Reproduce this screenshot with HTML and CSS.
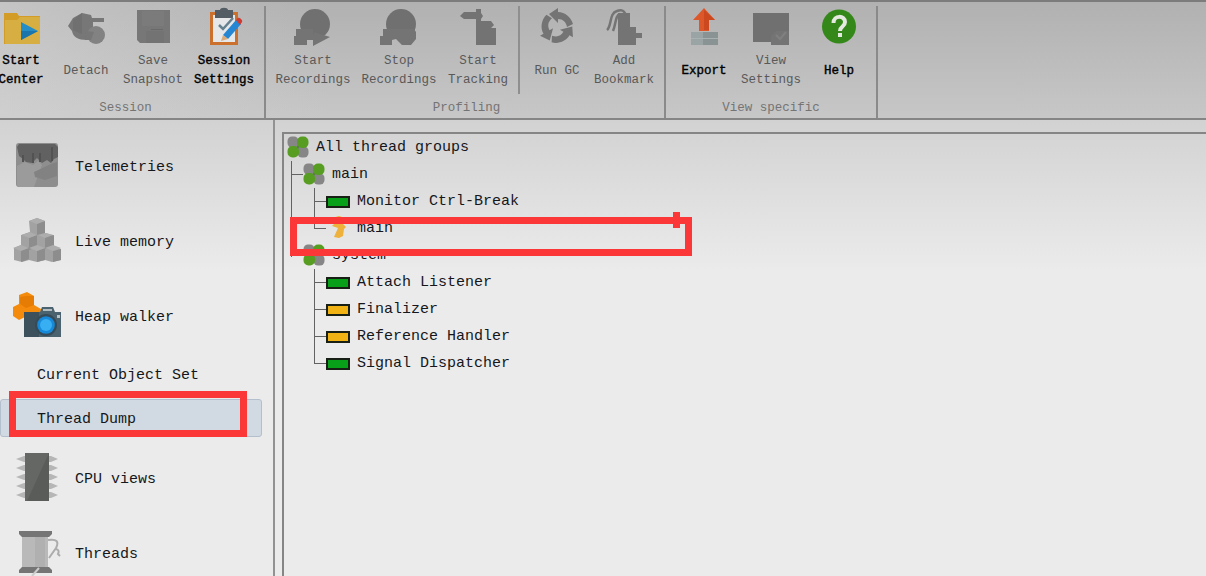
FILE: index.html
```html
<!DOCTYPE html>
<html lang="en">
<head>
<meta charset="utf-8">
<title>Thread Dump</title>
<link rel="stylesheet" href="styles.css">
</head>
<body>
<svg class="defs" width="0" height="0">
  <symbol id="clover" viewBox="0 0 22 22">
    <rect x="5" y="5" width="12" height="12" fill="#5d7350"/>
    <rect x="0.5" y="0.5" width="11" height="11" rx="4.500" fill="#858685"/>
    <rect x="10.500" y="10.500" width="11" height="11" rx="4.500" fill="#858685"/>
    <rect x="10" y="0.5" width="11.500" height="11.500" rx="5" fill="#579d22"/>
    <rect x="0.5" y="10" width="11.500" height="11.500" rx="5" fill="#579d22"/>
  </symbol>
</svg>
<header class="toolbar">
  <section class="group session">
    <div class="buttons">
      <div class="tool start"><svg viewBox="0 0 40 40"><path d="M3 6h13l2 3h21v28H3z" fill="#d29c26"/><path d="M4 13h12l3-3h20v27H4z" fill="#d6ae42"/><path d="M20 15l17 9-17 9z" fill="#258dc5"/><path d="M20 24h17l-17 9z" fill="#1975ab"/></svg><span>Start<br>Center</span></div>
      <div class="tool off detach"><svg viewBox="0 0 40 40"><path d="M2 19l5-8 9-5 9 2 1 3h12v4H27v5l-6 13c-9 0-14-3-15-9z" fill="#777"/><circle cx="30" cy="28" r="9" fill="#828282"/><path d="M20 24l8 1-3 8h-6z" fill="#777"/><path d="M7 13l9-7v21l-9-4z" fill="#707070"/></svg><span>Detach</span></div>
      <div class="tool off save"><svg viewBox="0 0 40 40"><path d="M4 3h33v33H7l-3-3z" fill="#777"/><path d="M9 4h22v15H9z" fill="#7b7b7b"/><path d="M13 24h18v12H13z" fill="#737373"/><path d="M18 22h12v1H18z" fill="#696969"/></svg><span>Save<br>Snapshot</span></div>
      <div class="tool settings"><svg viewBox="0 0 40 40"><path d="M6 5h28v33H6z" fill="#cb702d"/><path d="M9 8h22v27H9z" fill="#e5e7e8"/><path d="M11 3h5c0-3 8-3 8 0h5v8H11z" fill="#535d63"/><path d="M15 18l4 4 10-11" fill="none" stroke="#65808f" stroke-width="2.500"/><path d="M19 28L32 13l5 4-13 15z" fill="#2586d3"/><path d="M32 13l2-2c1-1 5 2 4 4l-2 3z" fill="#ce3b32"/><path d="M19 28l5 4-7 2z" fill="#d8aa79"/></svg><span>Session<br>Settings</span></div>
    </div>
    <h2>Session</h2>
  </section>
  <section class="group profiling">
    <div class="buttons">
      <div class="tool off rec"><svg viewBox="0 0 40 40"><circle cx="22" cy="17" r="15" fill="#707070"/><path d="M3 22h17v7l1-4 16 5-17 9v-6h-6v5H1v-9h2z" fill="#747474"/></svg><span>Start<br>Recordings</span></div>
      <div class="tool off stop"><svg viewBox="0 0 40 40"><circle cx="22" cy="17" r="15" fill="#707070"/><path d="M4 22h31l2 3v7l-5 6h-9l-6-6-4 1v5H1v-9h3z" fill="#747474"/></svg><span>Stop<br>Recordings</span></div>
      <div class="tool off track"><svg viewBox="0 0 40 40"><path d="M2 9l4-4h12V2h5v4l2 3-2 3v2h10l3 4-3 3h5v17H18V12H6z" fill="#737373"/></svg><span>Start<br>Tracking</span></div>
      <i class="divider"></i>
      <div class="tool off gc"><svg viewBox="0 0 40 40"><g id="arrow"><path d="M12 7l9-6v4c7 0 13 5 15 12l-6 3c-1-5-4-8-9-8v4z" fill="#747474"/></g><use href="#arrow" transform="rotate(120 20 20)"/><use href="#arrow" transform="rotate(240 20 20)"/></svg><span>Run GC</span></div>
      <div class="tool off mark"><svg viewBox="0 0 40 40"><path d="M14 6h12v14h6v6h6v5h-6v7H14z" fill="#747474"/><path d="M3 23C8 19 5 6 13 4q7-3 9 5M9 24c3-6 2-16 7-17" fill="none" stroke="#747474" stroke-width="2.500"/></svg><span>Add<br>Bookmark</span></div>
    </div>
    <h2>Profiling</h2>
  </section>
  <section class="group view">
    <div class="buttons">
      <div class="tool export"><svg viewBox="0 0 40 40"><path d="M20 1l11 12h-6v11H15V13H9z" fill="#dc582b"/><path d="M20 3v20h5V13h6z" fill="#cc481e"/><path d="M7 25h27v13H7z" fill="#9ba4a4"/><path d="M19 25h15v13H19z" fill="#8a9394"/><path d="M7 31h27v1H7z" fill="#a9b0b0"/></svg><span>Export</span></div>
      <div class="tool off vset"><svg viewBox="0 0 40 40"><path d="M2 6h36v32H20v-3H2z" fill="#707070"/><path d="M25 24h13v14H20v-9z" fill="#747474"/><path d="M25 28l4 4 6-7" fill="none" stroke="#808080" stroke-width="2"/></svg><span>View<br>Settings</span></div>
      <div class="tool help"><svg viewBox="0 0 40 40"><circle cx="20" cy="19.500" r="17" fill="#348719"/><path d="M14.500 16c0-8 11.500-8 11.500-1 0 5-5 4-5 9" fill="none" stroke="#e5e9e1" stroke-width="4"/><path d="M19 26h4v4h-4z" fill="#e5e9e1"/></svg><span>Help</span></div>
    </div>
    <h2>View specific</h2>
  </section>
</header>
<main class="workspace">
  <nav class="sidebar">
    <div class="nav-item"><svg viewBox="0 0 50 50"><rect x="4" y="1" width="42" height="44" rx="3" fill="#8e8e8e"/><path d="M5 5l2-3h36l3 3v10l-4 2-3 4-4-3-5 3-5-5-5 5-6-1-3-3-4-3z" fill="#616161"/><path d="M5 24l8-4 8 3 5-4 4 4-8 22H7l-2-2z" fill="#9b9b9b"/><path d="M22 30l17-8 6-2v14l-12 4-10-3z" fill="#828282"/><path d="M11 13v7m10-9v10m7-10v9m12-15v14" stroke="#525252" stroke-width="2"/></svg><span>Telemetries</span></div>
    <div class="nav-item"><svg viewBox="0 0 50 50"><path d="M17 4l8-3 8 3v12l8 2 1 11 7 3v11l-9 2-7-2-8 2-8-2-7 2-8-2V31l7-3V18l9-3z" fill="#a2a2a2"/><path d="M25 6l8-2v12l-8 2zM17 21l8-3v12l-8 3zM33 20l9-2v11l-9 3zM9 33l8-3v12l-8 3zM25 34l8-3v12l-8 2zM41 34l8-2v11l-8 2z" fill="#8d8d8d"/><path d="M17 4l8-3 8 3-8 3zM10 18l8-3 7 3-8 3zM26 18l8-2 7 2-8 3zM1 31l8-3 8 3-8 3zM17 31l8-3 8 3-8 3zM33 31l8-3 8 3-8 3z" fill="#adadad"/></svg><span>Live memory</span></div>
    <div class="nav-item"><svg viewBox="0 0 50 50"><path d="M7 3l8-3 7 4v9l7 4-1 7-8 2-5-2-8 4-6-4v-9l6-3z" fill="#f48b0c"/><path d="M14 4l8 0v9l-8 3-6-4v-7z" fill="#e77c05"/><path d="M12 20h16l2-5h11l2 5h6v25H12z" fill="#4b626f"/><path d="M12 20h15v25H12z" fill="#3d515d"/><path d="M31 17h9v2h-9z" fill="#b3bdc1"/><circle cx="34" cy="33" r="11" fill="#374b56"/><circle cx="34" cy="33" r="8.800" fill="#1689d9"/><circle cx="34" cy="33" r="6" fill="#38aef3"/><path d="M45 23h3v3h-3z" fill="#b8c1c4"/></svg><span>Heap walker</span></div>
    <div class="sub-item">Current Object Set</div>
    <div class="sub-item selected">Thread Dump</div>
    <div class="nav-item raised"><svg viewBox="0 0 50 50"><path d="M4 7l8-3h27l7 3-7 3H12zM4 16l8-3h27l7 3-7 3H12zM4 25l8-3h27l7 3-7 3H12zM4 34l8-3h27l7 3-7 3H12zM4 43l8-3h27l7 3-7 3H12z" fill="#b5b6b5"/><path d="M13 1h24v48H13z" fill="#656765"/><path d="M37 1v48H15z" fill="#5a5c5a"/></svg><span>CPU views</span></div>
    <div class="nav-item raised"><svg viewBox="0 0 50 50"><path d="M10 6h26v36H10z" fill="#b8b9b8"/><path d="M23 6h10v36H23z" fill="#afb0af"/><path d="M7 4h33v3l-3 3H10L7 7zM7 46v-3l3-3h27l3 3v3z" fill="#747574"/><path d="M36 13q13-2 8 8l-7 10m7-9q4 1 2 5l2 2" fill="none" stroke="#acacac" stroke-width="2"/><path d="M20 49l7-8" stroke="#ccc" stroke-width="2"/></svg><span>Threads</span></div>
  </nav>
  <section class="content">
    <ul class="tree">
      <li><div class="row"><svg><use href="#clover"/></svg>All thread groups</div>
        <ul class="groups">
          <li><div class="row"><svg><use href="#clover"/></svg>main</div>
            <ul class="leaves">
              <li><i class="state green"></i>Monitor Ctrl-Break</li>
              <li><svg class="bolt" viewBox="0 0 24 26"><path d="M6 2l7-2 6 2-2 6 3 3-2 2-1 7-4 2-5-1 4-9-6-2 4-4z" fill="#edb13c"/></svg>main</li>
            </ul>
          </li>
          <li><div class="row"><svg><use href="#clover"/></svg>system</div>
            <ul class="leaves">
              <li><i class="state green"></i>Attach Listener</li>
              <li><i class="state amber"></i>Finalizer</li>
              <li><i class="state amber"></i>Reference Handler</li>
              <li><i class="state green"></i>Signal Dispatcher</li>
            </ul>
          </li>
        </ul>
      </li>
    </ul>
  </section>
</main>
<div class="marker marker-nav"></div>
<div class="marker marker-thread"></div>
<div class="marker-tick"></div>
</body>
</html>
```
FILE: styles.css
```css
* { box-sizing: border-box; }
body {
  margin: 0;
  width: 1206px;
  height: 576px;
  overflow: hidden;
  position: relative;
  display: flex;
  flex-direction: column;
  font: 15px/27px "Liberation Mono", monospace;
  color: #15171c;
  background: #ebebeb;
}
svg { display: block; flex: none; }
.defs { position: absolute; }
ul { list-style: none; margin: 0; padding: 0; }

.toolbar {
  display: flex;
  flex: none;
  height: 120px;
  padding-top: 4px;
  border-top: 2px solid #7c7c7c;
  border-bottom: 2px solid #858585;
  background:
    linear-gradient(90deg, rgba(215, 215, 215, 0.5), rgba(215, 215, 215, 0) 330px),
    linear-gradient(#b1b1b1, #c7c7c7);
}
.group {
  flex: none;
  height: 112px;
  border-right: 2px solid #8a8a8a;
}
.session { width: 266px; }
.profiling { width: 400px; }
.view { width: 212px; }
.buttons { display: flex; height: 87px; }
.group h2 {
  margin: 6px 0 0;
  font-size: 12.5px;
  font-weight: normal;
  line-height: 19px;
  color: #747474;
  text-align: center;
}
.session h2 { padding-right: 13px; }
.profiling h2 { padding-left: 3px; }
.tool {
  flex: none;
  width: 76px;
  display: flex;
  flex-direction: column;
  align-items: center;
  font-size: 12.5px;
  line-height: 19px;
  text-align: center;
  white-space: nowrap;
  color: #000;
  -webkit-text-stroke: 0.4px #000;
}
.tool svg { width: 40px; height: 40px; margin-top: 1px; }
.tool span { height: 44px; margin-top: 2px; display: flex; align-items: center; }
.tool.off { color: #595959; -webkit-text-stroke: 0; }
.start { width: 42px; }
.detach { width: 52px; margin-left: 18px; }
.save { width: 68px; margin-left: 7px; }
.settings { width: 68px; margin-left: 3px; }
.rec { margin-left: 9px; }
.stop { margin-left: 10px; }
.track { width: 64px; margin-left: 9px; }
.divider { width: 2px; height: 88px; margin-left: 8px; background: #8f8f8f; }
.gc { width: 54px; margin-left: 10px; }
.mark { width: 64px; margin-left: 8px; }
.export { width: 54px; margin-left: 11px; }
.vset { width: 64px; margin-left: 8px; }
.help { width: 40px; margin-left: 16px; }

.workspace {
  flex: 1;
  min-height: 0;
  display: flex;
  background: linear-gradient(#d2d2d2, #ebebeb 150px);
}
.sidebar {
  flex: none;
  width: 275px;
  padding-top: 9px;
  border-right: 2px solid #929292;
}
.nav-item {
  display: flex;
  align-items: center;
  gap: 13px;
  height: 75px;
  padding-left: 12px;
}
.nav-item svg { width: 50px; height: 50px; }
.nav-item span { padding-top: 2px; }
.sub-item {
  width: 262px;
  height: 38px;
  padding-left: 37px;
  line-height: 38px;
}
.nav-item + .sub-item { margin: 3px 0 4px; }
.selected {
  padding-left: 36px;
  line-height: 39px;
  border: 1px solid #b4bfcd;
  border-radius: 3px;
  background: #d1dae2;
}
.selected + .nav-item { margin-top: 5px; }
.raised svg { margin-bottom: 6px; }
.raised span { padding-top: 0; }
.content {
  flex: 1;
  min-width: 0;
  margin: 12px 0 0 7px;
  border: solid #858585;
  border-width: 2px 0 0 2px;
}
.tree { padding-left: 3px; }
.row { display: flex; align-items: center; height: 27px; gap: 7px; }
.row svg { width: 22px; height: 22px; margin-bottom: 2px; }
.groups {
  margin-left: 4px;
  background: linear-gradient(#626262, #626262) 0 0 / 1px 96px no-repeat;
}
.groups .row::before { content: ""; width: 12px; height: 1px; margin-right: -7px; background: #626262; }
.leaves { margin-left: 23px; }
.leaves li {
  height: 27px;
  display: flex;
  align-items: center;
  background: linear-gradient(#626262, #626262) 0 0 / 1px 100% no-repeat;
}
.leaves li:last-child { background-size: 1px 14px; }
.leaves li::before { content: ""; width: 12px; height: 1px; background: #626262; }
.state { width: 24px; height: 12px; margin-right: 7px; border: 2px solid #182016; }
.green { background: #08a018; }
.amber { background: #f1b313; }
.bolt { width: 24px; height: 26px; margin-right: 7px; }

.marker { position: absolute; border: 7px solid #fc3737; }
.marker-nav { left: 9px; top: 391px; width: 238px; height: 46px; }
.marker-thread { left: 290px; top: 217px; width: 402px; height: 39px; }
.marker-tick { position: absolute; left: 673px; top: 212px; width: 7px; height: 16px; background: #fc3737; }
```
